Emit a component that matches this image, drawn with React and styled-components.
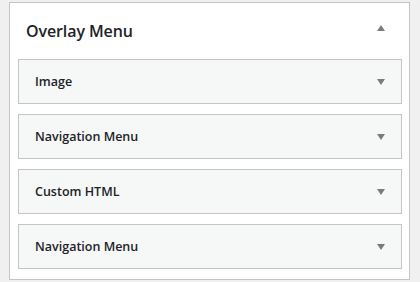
import styled, { createGlobalStyle } from "styled-components";

const GlobalStyle = createGlobalStyle`
    html, body {
        margin: 0;
        padding: 0;
        background: #f0f0f1;
        font-family: "Open Sans", "Noto Sans", sans-serif;
        color: #1d2327;
    }
`

//  *** Styled components ***

const Page = styled.div`
    width: 420px;
    height: 282px;
    padding: 2px 10px 0 9px;
    box-sizing: border-box;
`

const Panel = styled.section`
    background: #fff;
    border: 1px solid #c3c4c7;
    box-sizing: border-box;
    padding: 0 7px 10px 8px;
`

const PanelHeader = styled.div`
    display: flex;
    align-items: center;
    justify-content: space-between;
    height: 56px;
    padding: 0 17px 0 8px;
`

const Title = styled.h2`
    margin: 0;
    font-size: 16px;
    font-weight: 600;
    letter-spacing: -0.1px;
    padding-bottom: 1px;
`

const Arrow = styled.span`
    width: 0;
    height: 0;
    border-left: 4px solid transparent;
    border-right: 4px solid transparent;
    ${({ $up }) => $up
        ? "border-bottom: 6px solid #787c82; margin-top: -6px;"
        : "border-top: 6px solid #787c82;"}
`

const WidgetList = styled.div`
    display: flex;
    flex-direction: column;
    gap: 10px;
`

const Widget = styled.div`
    display: flex;
    align-items: center;
    justify-content: space-between;
    height: 45px;
    box-sizing: border-box;
    border: 1px solid #c3c4c7;
    background: #f6f7f7;
    padding: 0 16px 0 16px;
`

const WidgetTitle = styled.h3`
    margin: 0;
    font-size: 12.5px;
    font-weight: 600;
`

const widgets = ["Image", "Navigation Menu", "Custom HTML", "Navigation Menu"]

function App() {
    return (
        <>
            <GlobalStyle />
            <Page>
                <Panel>
                    <PanelHeader>
                        <Title>Overlay Menu</Title>
                        <Arrow $up />
                    </PanelHeader>
                    <WidgetList>
                        {widgets.map((w, i) => (
                            <Widget key={i}>
                                <WidgetTitle>{w}</WidgetTitle>
                                <Arrow />
                            </Widget>
                        ))}
                    </WidgetList>
                </Panel>
            </Page>
        </>
    )
}

export default App;
